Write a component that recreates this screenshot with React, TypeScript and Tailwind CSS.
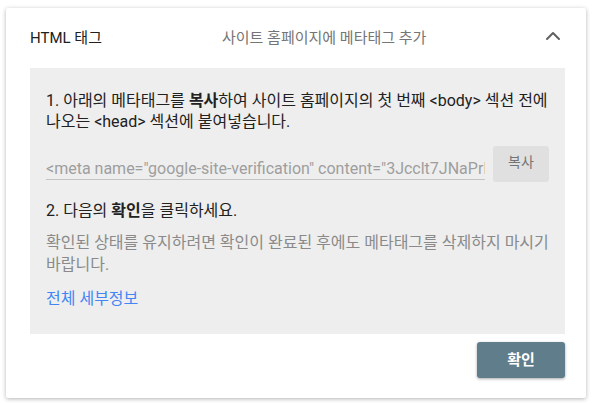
import { ChevronUp } from 'lucide-react'

const META_TAG = '<meta name="google-site-verification" content="3Jcclt7JNaPrIx0dKQvZ8mWc2hL5sYtR4uEfGbN1oA" />'

const App = () => {
  return (
    <div className="w-[593px] h-[403px] bg-white pt-2 px-[6px] font-['Roboto','Noto_Sans_CJK_KR',sans-serif]">
      <div className="w-[580px] h-[390px] bg-white rounded-[2px] shadow-[0_1px_4px_rgba(0,0,0,0.3)] pl-6 pr-[21px] flex flex-col">
        {/* header */}
        <div className="h-[60px] flex items-center">
          <div className="w-[192px] text-[15px] text-[#212121]">HTML 태그</div>
          <div className="flex-1 text-[15px] text-[#757575]">사이트 홈페이지에 메타태그 추가</div>
          <ChevronUp className="w-6 h-6 text-[#616161] -mt-1" strokeWidth={2} />
        </div>

        {/* body */}
        <div className="h-[266px] bg-[#eeeeee] px-4 pt-[22px] break-keep">
          <p className="text-[16px] leading-[21px] text-[#212121]">
            1. 아래의 메타태그를 <b className="font-bold">복사</b>하여 사이트 홈페이지의 첫 번째 &lt;body&gt; 섹션 전에 나오는 &lt;head&gt; 섹션에 붙여넣습니다.
          </p>

          <div className="flex items-end gap-2 mt-[14px]">
            <div className="flex-1 mb-[2px] overflow-hidden whitespace-nowrap border-b border-[#c4c4c4] text-[16px] leading-[20px] text-[#9e9e9e]">
              {META_TAG}
            </div>
            <button className="w-[56px] h-9 pb-[3px] rounded-[3px] bg-[#e0e0e0] text-[14px] text-[#757575]">
              복사
            </button>
          </div>

          <p className="mt-[18px] text-[16px] leading-[22px] text-[#212121]">
            2. 다음의 <b className="font-bold">확인</b>을 클릭하세요.
          </p>

          <p className="mt-[10px] text-[16px] leading-[22px] text-[#8a8a8a]">
            확인된 상태를 유지하려면 확인이 완료된 후에도 메타태그를 삭제하지 마시기 바랍니다.
          </p>

          <a href="#" className="block mt-[12px] text-[16px] leading-[22px] text-[#4285f4]">
            전체 세부정보
          </a>
        </div>

        {/* footer */}
        <div className="flex justify-end mt-2">
          <button className="w-[88px] h-9 rounded-[3px] bg-[#607d8b] text-white text-[15px] font-bold shadow-[0_1px_3px_rgba(0,0,0,0.35)]">
            확인
          </button>
        </div>
      </div>
    </div>
  )
}

export default App
